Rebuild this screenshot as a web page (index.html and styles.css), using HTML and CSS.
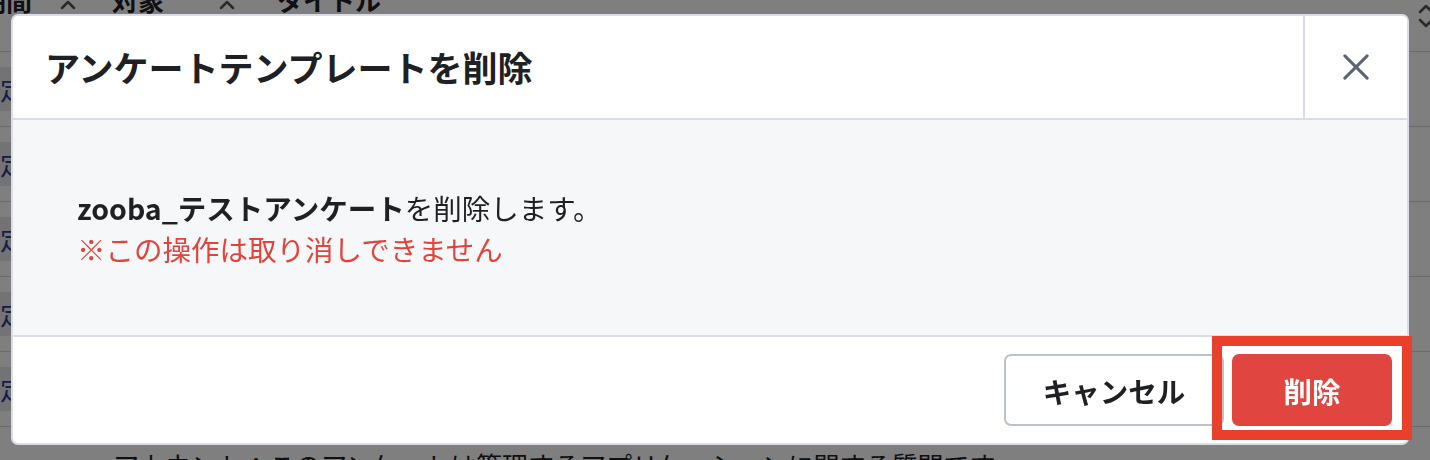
FILE: index.html
```html
<!DOCTYPE html>
<html lang="ja">
<head>
  <meta charset="UTF-8">
  <meta name="viewport" content="width=device-width, initial-scale=1.0"/>
  <title>アンケートテンプレート</title>
  <link rel="stylesheet" href="styles.css">
</head>
<body>

  <!-- template list behind the dialog -->
  <div class="list">
    <div class="list-head">
      <span class="col col-term">期間</span>
      <svg class="sort sort-term" viewBox="0 0 16 10"><path d="M2 8l6-6 6 6"/></svg>
      <span class="col col-target">対象</span>
      <svg class="sort sort-target" viewBox="0 0 16 10"><path d="M2 8l6-6 6 6"/></svg>
      <span class="col col-title">タイトル</span>
      <svg class="sort sort-both" viewBox="0 0 16 26"><path d="M2 9l6-6 6 6M2 17l6 6 6-6"/></svg>
    </div>
    <div class="list-row"><span class="tag">未設定</span></div>
    <div class="list-row"><span class="tag">未設定</span></div>
    <div class="list-row"><span class="tag">未設定</span></div>
    <div class="list-row"><span class="tag">未設定</span></div>
    <div class="list-row"><span class="tag">未設定</span></div>
    <div class="list-row">
      <span class="desc">アカウント：このアンケートは管理するアプリケーションに関する質問です。</span>
    </div>
  </div>

  <div class="overlay">
    <div class="modal">
      <div class="modal-head">
        <h1 class="modal-title">アンケートテンプレートを削除</h1>
        <button class="modal-close" aria-label="閉じる">
          <svg viewBox="0 0 28 28"><path d="M2 2l24 24M26 2L2 26"/></svg>
        </button>
      </div>
      <div class="modal-body">
        <p><strong>zooba_テストアンケート</strong>を削除します。</p>
        <p class="warn">※この操作は取り消しできません</p>
      </div>
      <div class="modal-foot">
        <button class="btn btn-cancel">キャンセル</button>
        <span class="focus-mark">
          <button class="btn btn-danger">削除</button>
        </span>
      </div>
    </div>
  </div>

</body>
</html>
```

FILE: styles.css
```css
* {
  box-sizing: border-box;
}
body {
  margin: 0;
  background: #fff;
  font-family: "Noto Sans CJK JP", "Noto Sans", sans-serif;
  color: #1f2024;
  overflow: hidden;
}

/* list behind */
.list {
  margin-top: -40px;
}
.list-head {
  display: flex;
  align-items: flex-start;
  height: 92px;
  padding-top: 22px;
  border-bottom: 1px solid #d4d4d8;
  font-size: 26px;
  font-weight: 700;
  line-height: 36px;
}
.col-term {
  margin-left: -20px;
}
.sort {
  width: 16px;
  height: 10px;
  margin-top: 18px;
  fill: none;
  stroke: #555;
  stroke-width: 2.5;
  stroke-linecap: round;
  stroke-linejoin: round;
}
.sort-term {
  margin-left: 28px;
}
.sort-target {
  margin-left: 55px;
}
.col-target {
  margin-left: 36px;
}
.col-title {
  margin-left: 42px;
}
.sort-both {
  height: 26px;
  margin: 21px -4px 0 auto;
}
.list-row {
  display: flex;
  align-items: center;
  height: 75px;
  border-bottom: 1px solid #d4d4d8;
}
.tag {
  margin-left: -62px;
  padding: 2px 10px;
  background: #e6e6ea;
  color: #2c3b8f;
  font-size: 26px;
  line-height: 40px;
}
.desc {
  margin: 0 0 0 113px;
  align-self: flex-start;
  padding-top: 20px;
  font-size: 26px;
  line-height: 36px;
}

/* dialog */
.overlay {
  position: fixed;
  inset: 0;
  display: flex;
  padding: 14px 21px 15px 11px;
  background: rgba(0, 0, 0, 0.5);
}
.modal {
  flex: 1;
  display: flex;
  flex-direction: column;
  background: #fff;
  border: 2px solid #dadde5;
  border-radius: 7px;
}
.modal-head {
  display: flex;
  height: 104px;
  border-bottom: 2px solid #dadde5;
}
.modal-title {
  flex: 1;
  margin: 0;
  padding-left: 32px;
  align-self: center;
  font-size: 35px;
  font-weight: 700;
  line-height: 44px;
  color: #1f2024;
}
.modal-close {
  width: 104px;
  border: none;
  border-left: 2px solid #dadde5;
  background: none;
  display: flex;
  align-items: center;
  justify-content: center;
  cursor: pointer;
}
.modal-close svg {
  width: 26px;
  height: 26px;
  fill: none;
  stroke: #5d6474;
  stroke-width: 3.2;
  stroke-linecap: round;
}
.modal-body {
  flex: 1;
  display: flex;
  flex-direction: column;
  justify-content: center;
  padding: 0 64px;
  background: #f6f7f9;
  border-bottom: 2px solid #dadde5;
  font-size: 28.5px;
  line-height: 41px;
}
.modal-body p {
  margin: 0;
}
.warn {
  color: #e0443c;
}
.modal-foot {
  display: flex;
  align-items: center;
  justify-content: flex-end;
  gap: 8px;
  height: 106px;
  padding-right: 15px;
}
.btn {
  height: 72px;
  border-radius: 7px;
  font-family: inherit;
  font-size: 28.5px;
  font-weight: 700;
  cursor: pointer;
}
.btn-cancel {
  width: 220px;
  background: #fff;
  border: 2px solid #bcc2cd;
  color: #1f2024;
}
.btn-danger {
  width: 160px;
  background: #e0453f;
  border: none;
  color: #fff;
}
.focus-mark {
  position: relative;
  display: flex;
}
.focus-mark::after {
  content: "";
  position: absolute;
  top: -18px;
  bottom: -14px;
  left: -20px;
  right: -20px;
  border: 10px solid #e8402a;
  pointer-events: none;
}
```
